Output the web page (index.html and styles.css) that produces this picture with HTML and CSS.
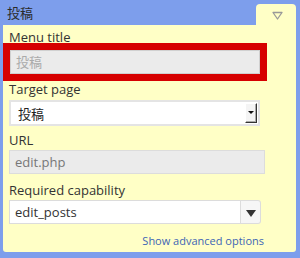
FILE: index.html
```html
<!DOCTYPE html>
<html lang="en">
<head>
    <meta charset="UTF-8">
    <title>Menu item editor</title>
    <link rel="stylesheet" href="styles.css">
</head>
<body>
    <div class="menu-item">
        <div class="item-header">
            <span class="item-title">投稿</span>
            <span class="toggle-tab">
                <svg width="11" height="9" viewBox="0 0 11 9">
                    <path d="M1 1.5 L10 1.5 L5.5 8 Z" fill="none" stroke="#999" stroke-width="1.3" stroke-linejoin="round"/>
                </svg>
            </span>
        </div>

        <div class="item-editor">
            <div class="field-label label-title">Menu title</div>
            <div class="highlight">
                <div class="field field-disabled title-field">投稿</div>
            </div>

            <div class="field-label label-page">Target page</div>
            <div class="old-select">
                <span class="select-value">投稿</span>
                <span class="old-arrow"></span>
            </div>

            <div class="field-label label-url">URL</div>
            <div class="field field-disabled url-field">edit.php</div>

            <div class="field-label label-cap">Required capability</div>
            <div class="combo">
                <div class="field combo-input">edit_posts</div>
                <span class="combo-button"></span>
            </div>

            <div class="advanced-row">
                <a href="#" class="advanced-link">Show advanced options</a>
            </div>
        </div>
    </div>
</body>
</html>
```

FILE: styles.css
```css
body {
    margin: 0;
    background: #7d9eec;
    font-family: 'Open Sans', 'Noto Sans CJK JP', sans-serif;
    color: #333;
}

.menu-item {
    width: 300px;
    height: 258px;
}

.item-header {
    display: flex;
    justify-content: space-between;
    align-items: flex-end;
    height: 25px;
}

.item-title {
    align-self: center;
    padding-left: 7px;
    font-size: 13px;
    line-height: 18px;
    color: #2a2a2a;
}

.toggle-tab {
    width: 40px;
    height: 21px;
    margin-right: 4px;
    background: #ffffc6;
    border-radius: 4px 4px 0 0;
    box-sizing: border-box;
    padding: 7px 0 0 16px;
}

.toggle-tab svg {
    display: block;
}

.item-editor {
    margin: 0 4px 0 3px;
    padding: 3px 6px 2px;
    height: 227px;
    box-sizing: border-box;
    background: #ffffc6;
    border-radius: 0 0 3px 3px;
}

.field-label {
    font-size: 13px;
    line-height: 18px;
    color: #333;
}

.label-page {
    margin-top: -1px;
}

.label-url {
    margin-top: 5px;
}

.label-cap {
    margin-top: 7px;
}

.field {
    box-sizing: border-box;
    height: 24px;
    border: 1px solid #dcdcdc;
    background: #fff;
    font-size: 13px;
    line-height: 22px;
    padding: 0 5px;
    color: #333;
}

.field-disabled {
    background: #ebebeb;
    color: #777;
}

.highlight {
    position: relative;
    z-index: 1;
    width: 264px;
    margin: -3px 0 0 -6px;
    border: 7px solid #d60000;
    box-sizing: border-box;
}

.title-field {
    color: #aaa;
    border-color: #d0d0d0;
}

.old-select {
    display: flex;
    justify-content: space-between;
    align-items: center;
    box-sizing: border-box;
    width: 251px;
    height: 26px;
    margin-top: 2px;
    padding: 0 1px 0 7px;
    background: #fff;
    border: 2px solid #e4e4e4;
    font-size: 13px;
    color: #222;
}

.old-arrow {
    position: relative;
    width: 12px;
    height: 20px;
    box-sizing: border-box;
    background: #f4f4f4;
    border-left: 1px solid #fff;
    border-top: 1px solid #fff;
    border-right: 1px solid #333;
    border-bottom: 1px solid #333;
    box-shadow: inset -1px -1px 0 #aaa;
}

.old-arrow::after {
    content: '';
    position: absolute;
    left: 2px;
    top: 7px;
    border-left: 3px solid transparent;
    border-right: 3px solid transparent;
    border-top: 3px solid #111;
}

.url-field {
    width: 256px;
    margin-top: 1px;
}

.combo {
    display: flex;
    margin-top: 1px;
}

.combo-input {
    width: 232px;
}

.combo-button {
    position: relative;
    width: 20px;
    height: 24px;
    box-sizing: border-box;
    background: #f6f6f6;
    border: 1px solid #dcdcdc;
    border-left: none;
    border-radius: 0 3px 3px 0;
}

.combo-button::after {
    content: '';
    position: absolute;
    left: 5px;
    top: 9px;
    border-left: 5px solid transparent;
    border-right: 5px solid transparent;
    border-top: 7px solid #333;
}

.advanced-row {
    margin-top: 6px;
    width: 255px;
    text-align: right;
    line-height: 18px;
}

.advanced-link {
    font-size: 11px;
    color: #3d65b5;
    text-decoration: none;
}
```
